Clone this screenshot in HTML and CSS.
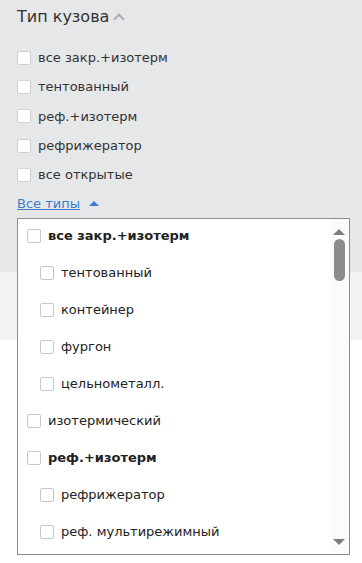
FILE: index.html
```html
<!DOCTYPE html>
<html>

<head>
    <title>Тип кузова</title>
    <link rel="stylesheet" href="styles.css">
</head>

<body>
    <div class="panel">
        <div class="title">Тип кузова <span class="chevron"></span></div>
        <ul class="checks">
            <li><span class="box"></span>все закр.+изотерм</li>
            <li><span class="box"></span>тентованный</li>
            <li><span class="box"></span>реф.+изотерм</li>
            <li><span class="box"></span>рефрижератор</li>
            <li><span class="box"></span>все открытые</li>
        </ul>
        <div class="more">
            <a href="#" class="link">Все типы</a><span class="tri"></span>
            <div class="dropdown">
                <ul class="options">
                    <li class="group"><span class="box"></span>все закр.+изотерм</li>
                    <li class="sub"><span class="box"></span>тентованный</li>
                    <li class="sub"><span class="box"></span>контейнер</li>
                    <li class="sub"><span class="box"></span>фургон</li>
                    <li class="sub"><span class="box"></span>цельнометалл.</li>
                    <li><span class="box"></span>изотермический</li>
                    <li class="group"><span class="box"></span>реф.+изотерм</li>
                    <li class="sub"><span class="box"></span>рефрижератор</li>
                    <li class="sub"><span class="box"></span>реф. мультирежимный</li>
                </ul>
                <div class="scrollbar">
                    <span class="arrow up"></span>
                    <span class="thumb"></span>
                    <span class="fill"></span>
                    <span class="arrow down"></span>
                </div>
            </div>
        </div>
    </div>
    <div class="band"></div>
</body>

</html>
```

FILE: styles.css
```css
html,
body {
    min-height: 100%;
}

body {
    margin: 0;
    min-height: 563px;
    background: white;
    font-family: "DejaVu Sans", Verdana, sans-serif;
    color: #333;
}

.panel {
    background: #e6e7e9;
    padding: 4px 17px 0 17px;
    height: 268px;
}

.title {
    font-size: 16px;
    height: 26px;
    line-height: 22px;
    display: flex;
    align-items: center;
    gap: 6px;
}

.chevron {
    width: 6px;
    height: 6px;
    border-left: 2px solid #a9adb6;
    border-top: 2px solid #a9adb6;
    transform: rotate(45deg);
    margin-top: 4px;
}

.checks {
    list-style: none;
    margin: 13px 0 0 0;
    padding: 0;
}

.checks li {
    height: 29.3px;
    display: flex;
    align-items: center;
    gap: 7px;
    font-size: 13px;
}

.box {
    width: 12px;
    height: 12px;
    background: white;
    border: 1px solid #d2d2d2;
    border-radius: 2px;
    flex: none;
}

.more {
    position: relative;
    height: 28px;
    display: flex;
    align-items: center;
    gap: 9px;
    font-size: 13px;
}

.link {
    color: #3d7cc9;
    text-decoration: underline;
}

.tri {
    width: 0;
    height: 0;
    border-left: 5px solid transparent;
    border-right: 5px solid transparent;
    border-bottom: 5px solid #3d7cc9;
}

.dropdown {
    position: absolute;
    z-index: 2;
    left: 0;
    top: 29px;
    width: 331px;
    height: 335px;
    background: white;
    border: 1px solid #8a8d92;
    display: flex;
    overflow: hidden;
}

.options {
    list-style: none;
    margin: -2px 0 0 0;
    padding: 0 0 0 9px;
    flex: 1;
}

.options li {
    height: 37px;
    display: flex;
    align-items: center;
    gap: 7px;
    font-size: 13px;
    color: #222;
}

.options .box {
    border-color: #c8c8c8;
}

.options .group {
    font-weight: bold;
}

.options .sub {
    padding-left: 13px;
}

.scrollbar {
    width: 16px;
    background: #fbfbfd;
    display: flex;
    flex-direction: column;
    align-items: center;
    padding: 0 2px 0 0;
}

.arrow {
    width: 0;
    height: 0;
    border-left: 6px solid transparent;
    border-right: 6px solid transparent;
    margin: 10px 0 4px 0;
}

.arrow.up {
    border-bottom: 6px solid #7d7d7d;
}

.arrow.down {
    border-top: 6px solid #7d7d7d;
    margin: 4px 0 9px 0;
}

.thumb {
    width: 11px;
    height: 42px;
    background: #8c8c8c;
    border-radius: 6px;
}

.fill {
    flex: 1;
}

.band {
    background: #f2f2f3;
    height: 68px;
}
```
